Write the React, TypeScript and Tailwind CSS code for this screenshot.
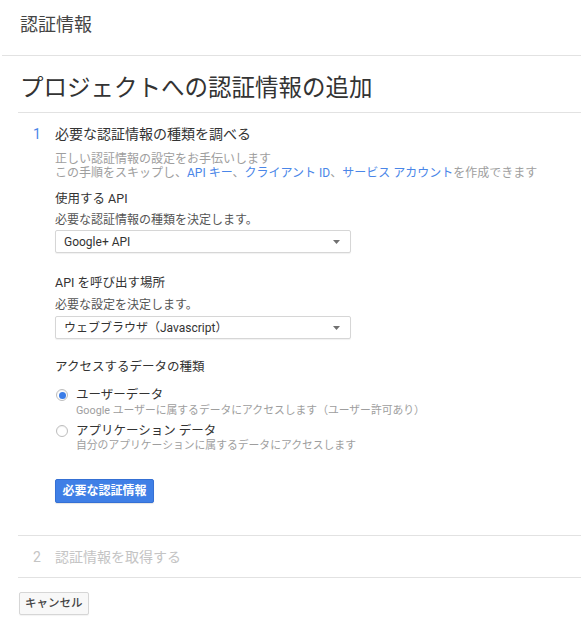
import React from "react";

const font = { fontFamily: 'Roboto, "Noto Sans CJK JP", sans-serif' };

function Select({ value }: { value: string }) {
  return (
    <div className="flex h-[23px] w-[296px] items-center justify-between rounded-[2px] border border-[#d6d6d6] bg-white pl-[8px] pr-[10px] text-[12px] leading-[16px] text-[#333] shadow-[0_1px_1px_rgba(0,0,0,0.06)]">
      <span>{value}</span>
      <svg width="7" height="4" viewBox="0 0 7 4">
        <path d="M0 0 L7 0 L3.5 4 Z" fill="#707070" />
      </svg>
    </div>
  );
}

function Radio({ checked }: { checked?: boolean }) {
  return (
    <span className="flex h-[12px] w-[12px] shrink-0 items-center justify-center rounded-full border border-[#bdbdbd] bg-white shadow-[inset_0_1px_1px_rgba(0,0,0,0.06)]">
      {checked && <span className="h-[7px] w-[7px] rounded-full bg-[#3b7de8]" />}
    </span>
  );
}

export default function App() {
  return (
    <div style={font} className="min-h-[639px] w-full bg-white text-[#333]">
      <div className="ml-[2px] h-[56px] border-b border-[#e2e2e2] pl-[18px] pt-[13px] text-[18px] leading-[24px] text-[#444]">
        認証情報
      </div>
      <div className="ml-[18px] border-b border-[#e2e2e2] pb-[8px] pl-[2px] pt-[16px] text-[23.5px] leading-[32px] text-[#333]">
        プロジェクトへの認証情報の追加
      </div>

      <div className="ml-[18px] flex border-b border-[#e2e2e2] pb-[32px] pt-[11px]">
        <div className="w-[37px] pl-[15px] text-[14px] leading-[20px] text-[#4a86e8]">1</div>
        <div className="flex flex-col">
          <div className="text-[14px] leading-[20px] text-[#333]">必要な認証情報の種類を調べる</div>
          <div className="mt-[8px] text-[12px] leading-[14px] text-[#9e9e9e]">
            <div>正しい認証情報の設定をお手伝いします</div>
            <div>
              この手順をスキップし、<span className="text-[#4a86e8]">API キー</span>、
              <span className="text-[#4a86e8]">クライアント ID</span>、
              <span className="text-[#4a86e8]">サービス アカウント</span>を作成できます
            </div>
          </div>
          <div className="mt-[10px] text-[12.5px] leading-[18px] text-[#333]">使用する API</div>
          <div className="mt-[4px] text-[12px] leading-[16px] text-[#555]">必要な認証情報の種類を決定します。</div>
          <div className="mt-[2px]">
            <Select value="Google+ API" />
          </div>
          <div className="mt-[21px] text-[12.5px] leading-[18px] text-[#333]">API を呼び出す場所</div>
          <div className="mt-[5px] text-[12px] leading-[16px] text-[#555]">必要な設定を決定します。</div>
          <div className="mt-[3px]">
            <Select value="ウェブブラウザ（Javascript）" />
          </div>
          <div className="mt-[19px] text-[12.5px] leading-[18px] text-[#333]">アクセスするデータの種類</div>

          <div className="mt-[11px] flex items-center gap-[8px] pl-[1px]">
            <Radio checked />
            <span className="text-[12.5px] leading-[16px] text-[#333]">ユーザーデータ</span>
          </div>
          <div className="mt-[1px] pl-[21px] text-[10.8px] leading-[14px] text-[#9e9e9e]">
            Google ユーザーに属するデータにアクセスします（ユーザー許可あり）
          </div>
          <div className="mt-[5px] flex items-center gap-[8px] pl-[1px]">
            <Radio />
            <span className="text-[12.5px] leading-[16px] text-[#333]">アプリケーション データ</span>
          </div>
          <div className="pl-[21px] text-[10.8px] leading-[14px] text-[#9e9e9e]">
            自分のアプリケーションに属するデータにアクセスします
          </div>

          <div className="mt-[25px]">
            <button className="h-[24px] w-[99px] rounded-[2px] border border-[#3570d4] bg-[#3f7fe6] text-[12px] font-bold leading-[16px] text-white shadow-[0_1px_1px_rgba(0,0,0,0.1)]">
              必要な認証情報
            </button>
          </div>
        </div>
      </div>

      <div className="ml-[18px] flex border-b border-[#e2e2e2] pb-[10px] pt-[11px] text-[14px] leading-[20px] text-[#c4c4c4]">
        <div className="w-[37px] pl-[15px]">2</div>
        <div>認証情報を取得する</div>
      </div>

      <div className="ml-[19px] mt-[12px]">
        <button className="h-[23px] rounded-[2px] border border-[#d6d6d6] bg-[#f8f8f8] px-[5px] text-[11.5px] font-medium leading-[16px] text-[#444] shadow-[0_1px_1px_rgba(0,0,0,0.05)]">
          キャンセル
        </button>
      </div>
    </div>
  );
}
